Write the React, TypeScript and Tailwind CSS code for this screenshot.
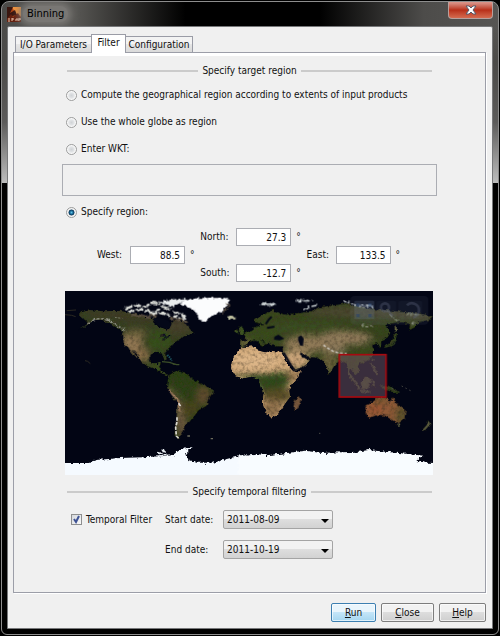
import { useState, type ReactNode } from "react";

const NORTH_AMERICA =
  "M60 95L62 85 90 78 130 82 180 80 215 88 260 100 285 104 280 118 300 130 325 138 335 118 345 108 370 112 385 130 402 148 380 155 365 162 350 172 335 182 325 195 315 208 321 222 318 230 312 226 305 209 285 206 272 212 270 230 280 241 292 240 298 235 303 237 299 248 305 260 320 270 332 272 318 277 300 265 285 253 262 247 245 235 235 215 222 200 216 195 232 222 226 220 208 195 205 190 192 180 190 160 188 145 170 132 150 118 125 108 100 108 80 125 55 137 85 118 75 108 65 103Z";
const SOUTH_AMERICA =
  "M328 272L348 260 380 268 400 285 425 300 440 307 460 315 458 328 445 345 440 366 415 380 405 395 388 415 375 425 368 442 360 455 357 466 343 458 345 430 350 395 352 355 335 335 320 310 322 290Z";
const AFRICA =
  "M-12 190L5 188 30 186 35 198 60 205 80 200 110 203 118 225 130 245 145 262 168 262 160 280 140 300 133 320 136 338 120 360 110 375 95 395 75 402 65 390 50 355 55 330 45 305 42 285 20 278 -10 284 -30 275 -42 255 -40 230 -25 205Z";
const EURASIA =
  "M-15 186L-14 168 5 168 0 155 -5 150 20 140 30 130 40 125 60 122 28 115 30 105 60 88 85 78 100 85 120 92 150 88 175 85 200 85 220 70 260 65 300 58 330 65 380 75 430 80 480 85 530 90 563 97 563 105 520 115 510 130 492 140 494 120 470 115 440 118 420 125 437 145 428 160 410 170 408 190 402 190 395 178 385 183 388 200 385 212 370 228 350 238 345 235 338 248 347 262 330 272 318 252 315 268 328 292 318 288 308 262 300 235 283 232 270 242 258 262 252 272 243 245 235 228 215 222 190 218 165 205 172 218 195 230 180 245 148 258 135 240 118 215 112 200 115 187 92 187 78 183 72 172 66 186 52 168 42 164 62 181 54 186 30 170 12 172 2 186 -8 190Z";
const AUSTRALIA =
  "M360 365L385 352 400 341 425 342 432 355 445 340 455 360 482 380 478 405 460 418 440 408 420 395 400 393 370 402 362 385Z";

function LandTexture({ id, seed }: { id: string; seed: number }) {
  return (
    <filter id={id} x="-10%" y="-10%" width="120%" height="120%">
      <feTurbulence type="fractalNoise" baseFrequency="0.09" numOctaves="3" seed={seed} result="noise" />
      <feDisplacementMap in="SourceGraphic" in2="noise" scale="12" xChannelSelector="R" yChannelSelector="G" result="shape" />
      <feColorMatrix in="noise" values="0 0 0 0 .05  0 0 0 0 .04  0 0 0 0 .02  1.5 0 0 0 -.62" result="shade" />
      <feComposite in="shade" in2="shape" operator="in" result="grain" />
      <feMerge>
        <feMergeNode in="shape" />
        <feMergeNode in="grain" />
      </feMerge>
    </filter>
  );
}

function WorldMap() {
  return (
    <svg viewBox="0 0 368 184" className="mt-[9px] mr-1 ml-[3px] block" role="img" aria-label="World map">
      <defs>
        <LandTexture id="west" seed={4} />
        <LandTexture id="east" seed={9} />
        <filter id="rough" x="-10%" y="-20%" width="120%" height="140%">
          <feTurbulence type="fractalNoise" baseFrequency="0.1" numOctaves="3" seed={2} />
          <feDisplacementMap in="SourceGraphic" scale="14" xChannelSelector="R" yChannelSelector="G" />
        </filter>
        <filter id="soft" x="-50%" y="-50%" width="200%" height="200%">
          <feGaussianBlur stdDeviation="9" />
        </filter>
        <clipPath id="na"><path d={NORTH_AMERICA} /></clipPath>
        <clipPath id="sa"><path d={SOUTH_AMERICA} /></clipPath>
        <clipPath id="af"><path d={AFRICA} /></clipPath>
        <clipPath id="eu"><path d={EURASIA} /></clipPath>
        <clipPath id="au"><path d={AUSTRALIA} /></clipPath>
      </defs>
      <rect width="368" height="184" fill="#020514" />

      <g transform="translate(-5 -7) scale(.33333)">
        <g filter="url(#west)">
          <g clipPath="url(#na)">
            <path d={NORTH_AMERICA} fill="#354022" />
            <g filter="url(#soft)">
              <path d="M60 80H390V112L200 112 110 100Z" fill="#3c3a26" />
              <ellipse cx="350" cy="130" rx="45" ry="22" fill="#453f2b" />
              <ellipse cx="215" cy="175" rx="32" ry="32" fill="#927753" />
              <ellipse cx="245" cy="212" rx="22" ry="22" fill="#8b6f48" />
              <ellipse cx="228" cy="148" rx="34" ry="14" fill="#6b603b" />
              <ellipse cx="298" cy="170" rx="36" ry="34" fill="#35501f" />
              <ellipse cx="285" cy="255" rx="32" ry="14" fill="#3a521f" />
            </g>
            <path d="M300 158l12-4 4 6-8 10M318 160l14-4" stroke="#0a1020" strokeWidth="4" fill="none" />
          </g>
          <path d="M85 118Q110 98 135 106T170 122 192 142" stroke="#a9aaa0" strokeWidth="4" strokeDasharray="9 5" fill="none" />
          <path d="M165 100l25 4M190 130l10 16" stroke="#8e917d" strokeWidth="3" strokeDasharray="5 5" fill="none" />
          <g clipPath="url(#sa)">
            <path d={SOUTH_AMERICA} fill="#2b4017" />
            <g filter="url(#soft)">
              <ellipse cx="430" cy="335" rx="24" ry="30" fill="#5f4b2f" />
              <ellipse cx="385" cy="375" rx="34" ry="24" fill="#49451f" />
              <ellipse cx="365" cy="425" rx="18" ry="38" fill="#65533a" />
              <path d="M320 310L358 350 350 420" stroke="#94745a" strokeWidth="8" fill="none" />
            </g>
            <path d="M326 318L355 350 358 382" stroke="#a27d60" strokeWidth="6" fill="none" />
          </g>
        </g>
        <g filter="url(#rough)">
          <path d="M358 58L380 46 420 42 492 42 510 48 500 62 486 84 455 96 438 112 420 108 410 90 398 74 372 66Z" fill="#fbfcfd" />
          <path d="M498 58l10 4-8 12-12 14" stroke="#5a4e40" strokeWidth="4" fill="none" />
          <path d="M298 53l34-6 40-4 14 4-30 10-18 12-24-6Z" fill="#e9eced" />
          <path d="M196 74l28-10 32 4 20-12 26 4M204 84l40-8 38 10 26-18 24 8M270 92l28-6 30 8M338 82l26 8 14 20-14-4-24-10" stroke="#d8dad5" strokeWidth="7" strokeDasharray="22 5" fill="none" />
          <path d="M215 92l48 6 30-4M330 104l30 2 20 10" stroke="#5e5345" strokeWidth="6" fill="none" />
          <path d="M502 97l18-2 8 5-14 6-12-3Z" fill="#bfc1a0" />
        </g>
        <path d="M278 106l22-4 26 8 8 12-6 12-16-2-20-8Z" fill="#040818" />
        <path d="M306 233l22 2 22 7M338 240l20 2" stroke="#3c4e29" strokeWidth="4" fill="none" />
        <path d="M322 213l8 8 5 10" stroke="#1d5560" strokeWidth="6" strokeDasharray="4 3" fill="none" />
        <path d="M15 92l20 2 12 4M20 80l28-2M75 230l8 2 8 7" stroke="#2c2a22" strokeWidth="3" fill="none" />
        <path d="M356 358l8 12M351 400v14l-4 16 2 26 8 8" stroke="#d9d7d1" strokeWidth="5" strokeDasharray="10 4" fill="none" />
        <path d="M382 456h8M452 464h7" stroke="#6d6c5c" strokeWidth="4" />
        <g filter="url(#rough)">
          <path d="M0 537H78L110 528 180 522 250 520 310 516 338 514 358 498 395 489 378 506 385 528 410 536 460 536 500 525 540 515 620 511V590H0Z" fill="#f5faff" />
          <path d="M292 506l18 6 14 0M304 499l10 1" stroke="#e3e9ee" strokeWidth="5" fill="none" />
        </g>
      </g>

      <g transform="translate(180 -7) scale(.33333)">
        <g filter="url(#east)">
          <g clipPath="url(#eu)">
            <path d={EURASIA} fill="#37461f" />
            <g filter="url(#soft)">
              <path d="M180 75Q380 55 563 88V112Q380 100 200 94Z" fill="#4c4733" />
              <ellipse cx="40" cy="150" rx="60" ry="20" fill="#384e1f" />
              <ellipse cx="180" cy="132" rx="120" ry="14" fill="#3a4f20" />
              <ellipse cx="185" cy="180" rx="70" ry="26" fill="#8f7957" />
              <ellipse cx="145" cy="230" rx="50" ry="28" fill="#cca67a" />
              <ellipse cx="300" cy="162" rx="80" ry="20" fill="#927c5c" />
              <ellipse cx="270" cy="196" rx="34" ry="15" fill="#8c795c" />
              <ellipse cx="250" cy="235" rx="24" ry="30" fill="#6b623b" />
              <ellipse cx="350" cy="215" rx="40" ry="28" fill="#38491f" />
              <ellipse cx="395" cy="145" rx="40" ry="15" fill="#34451e" />
              <ellipse cx="-2" cy="178" rx="12" ry="10" fill="#907b50" />
            </g>
          </g>
          <g clipPath="url(#af)">
            <path d={AFRICA} fill="#d2aa7b" />
            <g filter="url(#soft)">
              <ellipse cx="30" cy="230" rx="70" ry="25" fill="#dcb587" />
              <path d="M-50 270L60 268 130 264 140 285 110 325 50 325 20 285Z" fill="#2e481a" />
              <ellipse cx="100" cy="335" rx="50" ry="22" fill="#584d27" />
              <ellipse cx="80" cy="375" rx="32" ry="28" fill="#92724d" />
              <ellipse cx="148" cy="275" rx="17" ry="17" fill="#957550" />
            </g>
          </g>
          <g clipPath="url(#au)">
            <path d={AUSTRALIA} fill="#8f5b39" />
            <g filter="url(#soft)">
              <ellipse cx="470" cy="395" rx="18" ry="32" fill="#58502a" />
              <ellipse cx="405" cy="345" rx="32" ry="10" fill="#71522f" />
              <ellipse cx="390" cy="375" rx="24" ry="12" fill="#9c5230" />
            </g>
          </g>
          <path d="M150 350l14-12 4 6-8 28-10 6-5-8Z" fill="#79583d" />
          <path d="M407 305l14-2 18 6 24 16-12 2-18-6-18-4Z" fill="#30421e" />
          <path d="M308 264l26 34 10 18M346 320l30 4M350 296l14-14 12 4-8 24-14 2ZM382 290l6 18M380 238l8 18 10 16M382 222v8" stroke="#454d2c" strokeWidth="6" fill="none" />
          <path d="M350 296l14-14 12 4-8 24-14 2Z" fill="#454d2c" />
          <path d="M452 148l-4 18-10 16-18 5" stroke="#35451f" strokeWidth="8" fill="none" />
          <path d="M452 128v14M457 422h8M548 412l4 8-16 18" stroke="#616240" strokeWidth="6" fill="none" />
          <path d="M-16 126l10 6 4 18-12 2ZM-28 138h8v9h-8Z" fill="#3e5623" />
        </g>
        <path d="M88 158l12-6 18 12-14 5-17-2ZM160 158l9-4 7 10-2 22-9-2-6-16Z" fill="#040818" />
        <path d="M116 206l22 38 12 16M166 208l10 10 12 4" stroke="#040818" strokeWidth="6" fill="none" />
        <path d="M62 120l10-14 8-8M66 132l22-4" stroke="#040818" strokeWidth="6" fill="none" />
        <path d="M235 183l14 10 14 8 18 6 24 2" stroke="#d1cdc5" strokeWidth="4" strokeDasharray="9 5" fill="none" />
        <g filter="url(#rough)" fill="none" stroke="#c8cfd1">
          <path d="M48 58l20 4 24-2" strokeWidth="8" />
          <path d="M152 50h50M178 78l16-10 22-4M296 52l18 4 18 8 50 4" strokeWidth="5" strokeDasharray="18 6" />
          <path d="M352 124l34 2M436 92l20 18 10-4M485 90l40 2M500 122l10-8" stroke="#8f9582" strokeWidth="4" strokeDasharray="7 4" />
        </g>
        <path d="M440 314h8M222 448h5M470 306l34 18" stroke="#4b4c46" strokeWidth="3" strokeDasharray="4 9" />
        <g filter="url(#rough)">
          <path d="M-20 514L50 515 100 510 150 504 180 500 230 507 290 505 340 503 370 498 420 503 470 508 532 515 514 530 540 536 600 538V590H-20Z" fill="#f8fcff" />
        </g>
        <g fill="#7182a0">
          <rect x="316" y="36" width="234" height="86" rx="12" fillOpacity=".1" />
          <rect x="328" y="50" width="60" height="56" rx="4" fillOpacity=".22" />
          <rect x="394" y="50" width="60" height="56" rx="6" fillOpacity=".05" />
          <rect x="460" y="50" width="72" height="56" rx="6" fillOpacity=".05" />
        </g>
        <path d="M334 58h10v10h-10ZM370 58h10v10h-10ZM334 90h10v10h-10ZM370 90h10v10h-10Z" fill="#2b456c" fillOpacity=".6" />
        <g stroke="#66718a" strokeOpacity=".32" strokeWidth="8" fill="none">
          <circle cx="420" cy="70" r="12" />
          <path d="M429 80l14 16M486 64q8-10 22-5t14 20-18 22" />
        </g>
        <rect x="283" y="212" width="140" height="127" fill="#69505f" fillOpacity=".55" stroke="#a60a10" strokeWidth="5" />
      </g>
    </svg>
  );
}

function Separator({ children }: { children: ReactNode }) {
  return (
    <div className="flex h-4 items-center gap-1 px-[5px]">
      <span className="h-[2px] flex-1 bg-[#cbcbcb]" />
      <h2>{children}</h2>
      <span className="h-[2px] flex-1 bg-[#cbcbcb]" />
    </div>
  );
}

function Radio({ label, value, selected, onSelect }: { label: string; value: string; selected: string; onSelect: (v: string) => void }) {
  return (
    <label className="flex h-4 items-center gap-1 pl-1">
      <input
        type="radio"
        name="region"
        checked={selected === value}
        onChange={() => onSelect(value)}
        className="size-[11px] shrink-0 appearance-none rounded-full border border-[#9c9d9d] bg-[radial-gradient(circle,#d0d3d6_0,#e2e4e6_40%,#fafafa_65%)] checked:bg-[radial-gradient(circle,#5fc3e8_0,#12618f_28%,#0b3352_42%,#f4f4f4_52%)]"
      />
      {label}
    </label>
  );
}

function Coordinate({ label, value, labelWidth }: { label: string; value: string; labelWidth: string }) {
  return (
    <label className="flex h-[18px] items-center">
      <span className={labelWidth}>{label}:</span>
      <input defaultValue={value} className="h-[18px] w-[55px] border border-[#abadb3] bg-white pr-1 text-right outline-none" />
      <span className="pl-[5px]">°</span>
    </label>
  );
}

function DateSelect({ id, label, value }: { id: string; label: string; value: string }) {
  return (
    <div className="flex h-[19px] items-center">
      <label htmlFor={id} className="w-[58px]">{label}:</label>
      <div className="relative">
        <select
          id={id}
          defaultValue={value}
          className="block h-[19px] w-[110px] appearance-none rounded-[2px] border border-[#a4a4a4] bg-linear-to-b from-[#f2f2f2] from-45% via-[#dedede] via-50% to-[#d2d2d2] pl-[3px] outline-none"
        >
          <option>{value}</option>
        </select>
        <svg viewBox="0 0 8 4" className="pointer-events-none absolute top-[9px] right-1 h-1 w-2">
          <path d="M0 0h8L4 4Z" fill="#000" />
        </svg>
      </div>
    </div>
  );
}

const BUTTON = "h-[19px] rounded-[2px] border shadow-[inset_0_0_0_1px_#ffffffa0] bg-linear-to-b from-45% via-50%";
const GRAY_BUTTON = "border-[#7d7d7d] from-[#f2f2f2] via-[#dddddd] to-[#cfcfcf]";
const TAB = "border border-b-0 border-[#9a9ca6] bg-linear-to-b from-[#f3f3f3] from-45% via-[#e6e6e6] via-50% to-[#dadada]";

export default function App() {
  const [region, setRegion] = useState("specify");
  return (
    <div className="flex min-h-screen flex-col bg-black p-px font-['DejaVu_Sans_Condensed','DejaVu_Sans',sans-serif] text-[10px] leading-4 text-[#111]">
      <main className="flex flex-1 flex-col rounded-t-lg rounded-b-md border border-[#8d8d8d] bg-black bg-[linear-gradient(180deg,transparent_26px,#4b4a48_60px,#5c5b5a_120px,#bdbdbd_181px,#000_181px),linear-gradient(90deg,#4b4a48_0,#575653_15%,#000_37%,#000_64%,#4d4c4a_85%,#565553_100%)] px-[5px] pb-[5px]">
        <header className="flex h-6 items-start justify-between">
          <div className="flex items-center gap-[2px] pt-1">
            <svg viewBox="0 0 14 15" className="h-[15px] w-[14px]" aria-hidden="true">
              <rect width="14" height="15" fill="#b34515" />
              <path d="M5 0h9v9L9 7Z" fill="#ef9440" />
              <path d="M0 0h6L3 6l5-3 2 5-5 1-5 3Z" fill="#3a1711" />
              <path d="M0 12l4-5 2 3 5-4 3 5v4H0Z" fill="#64200f" />
              <path d="M1 12h2M1 14h2M5 11v3M5 12h2M9 14v-2h2v2M12 14v-3l1 2 1-2" stroke="#efc6ae" fill="none" />
            </svg>
            <h1 className="rounded-full bg-[#797774] px-1 text-[11px] leading-4 text-black shadow-[0_0_7px_4px_#797774]">Binning</h1>
          </div>
          <button aria-label="Close window" className="flex h-[17px] w-[45px] items-center justify-center rounded-b-[4px] border border-t-0 border-[#b7a09d] bg-linear-to-b from-[#d99186] from-5% via-[#b82e18] via-50% to-[#d46a4f]">
            <svg viewBox="0 0 12 10" className="h-[10px] w-3">
              <path d="M1 1h3l2 2 2-2h3L8 5l3 4H8L6 7 4 9H1l3-4Z" fill="#fff" stroke="#555b6b" />
            </svg>
          </button>
        </header>

        <div className="flex flex-1 flex-col rounded-t-[2px] border border-[#77787a] bg-[#f0f0f0] pt-[7px] pr-[6px] pb-[6px] pl-[5px]">
          <div role="tablist" className="flex items-end px-[2px]">
            <button role="tab" aria-selected="false" className={`${TAB} h-4 w-[76px] border-r-0 leading-[14px] whitespace-nowrap`}>I/O Parameters</button>
            <button role="tab" aria-selected="true" className="relative -mb-px h-[19px] w-[35px] border border-b-0 border-[#9a9ca6] bg-white pb-[2px]">Filter</button>
            <button role="tab" aria-selected="false" className={`${TAB} h-4 w-[67px] border-l-0 leading-[14px] whitespace-nowrap`}>Configuration</button>
          </div>

          <section role="tabpanel" className="flex-1 border border-[#9c9ea8] px-12 pt-[10px] shadow-[inset_0_3px_0_#fff,1px_1px_0_#fff]">
            <Separator>Specify target region</Separator>
            <fieldset className="pt-2">
              <div className="flex flex-col gap-[11px]">
                <Radio value="extents" selected={region} onSelect={setRegion} label="Compute the geographical region according to extents of input products" />
                <Radio value="globe" selected={region} onSelect={setRegion} label="Use the whole globe as region" />
                <Radio value="wkt" selected={region} onSelect={setRegion} label="Enter WKT:" />
              </div>
              <textarea aria-label="WKT" className="mt-[7px] mb-2 block h-8 w-full resize-none border border-[#abadb3] bg-transparent outline-none" />
              <Radio value="specify" selected={region} onSelect={setRegion} label="Specify region:" />
            </fieldset>
            <div className="flex flex-col pt-2">
              <div className="flex justify-center pl-[2px]"><Coordinate label="North" value="27.3" labelWidth="w-9" /></div>
              <div className="flex justify-between pr-[37px] pl-[35px]">
                <Coordinate label="West" value="88.5" labelWidth="w-[33px]" />
                <Coordinate label="East" value="133.5" labelWidth="w-[29px]" />
              </div>
              <div className="flex justify-center pl-[2px]"><Coordinate label="South" value="-12.7" labelWidth="w-9" /></div>
            </div>
            <WorldMap />
            <div className="pt-[9px]"><Separator>Specify temporal filtering</Separator></div>
            <div className="flex gap-[13px] pt-[10px] pl-[9px]">
              <label className="flex h-[19px] items-center gap-1 whitespace-nowrap">
                <span className="relative flex">
                  <input type="checkbox" defaultChecked className="peer size-[11px] appearance-none border border-[#8e8f8f] bg-linear-to-br from-[#d5d8dc] to-[#fafafa]" />
                  <svg viewBox="0 0 11 11" className="pointer-events-none invisible absolute inset-0 peer-checked:visible">
                    <path d="M3 5l2 3 3-6" stroke="#3e5294" strokeWidth="2" fill="none" />
                  </svg>
                </span>
                Temporal Filter
              </label>
              <div className="flex flex-col gap-[11px]">
                <DateSelect id="start" label="Start date" value="2011-08-09" />
                <DateSelect id="end" label="End date" value="2011-10-19" />
              </div>
            </div>
          </section>

          <footer className="flex justify-end gap-[5px] pt-[10px]">
            <button className={`${BUTTON} w-[45px] border-[#3c7fb1] from-[#e9f5fc] via-[#c4e5f8] to-[#a5d6f0]`}><u>R</u>un</button>
            <button className={`${BUTTON} ${GRAY_BUTTON} w-[53px]`}><u>C</u>lose</button>
            <button className={`${BUTTON} ${GRAY_BUTTON} w-[47px]`}><u>H</u>elp</button>
          </footer>
        </div>
      </main>
    </div>
  );
}
